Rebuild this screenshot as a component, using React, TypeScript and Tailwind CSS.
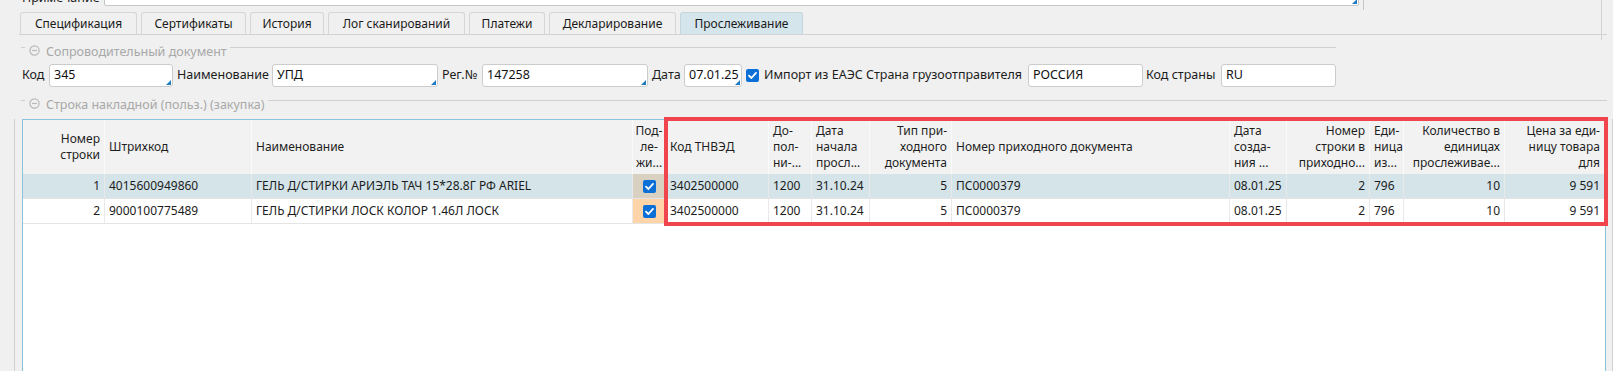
import React from "react";

type Align = "l" | "r" | "c";
const cols: { w: number; a: Align; h: string[] }[] = [
  { w: 82, a: "r", h: ["Номер", "строки"] },
  { w: 147, a: "l", h: ["Штрихкод"] },
  { w: 381, a: "l", h: ["Наименование"] },
  { w: 33, a: "c", h: ["Под-", "ле-", "жи..."] },
  { w: 103, a: "l", h: ["Код ТНВЭД"] },
  { w: 43, a: "l", h: ["До-", "пол-", "ни-..."] },
  { w: 58, a: "l", h: ["Дата", "начала", "просл..."] },
  { w: 82, a: "r", h: ["Тип при-", "ходного", "документа"] },
  { w: 278, a: "l", h: ["Номер приходного документа"] },
  { w: 57, a: "l", h: ["Дата", "созда-", "ния ..."] },
  { w: 83, a: "r", h: ["Номер", "строки в", "приходно..."] },
  { w: 34, a: "l", h: ["Еди-", "ница", "из..."] },
  { w: 101, a: "r", h: ["Количество в", "единицах", "прослеживае..."] },
  { w: 100, a: "r", h: ["Цена за еди-", "ницу товара", "для"] },
];

const rows = [
  {
    bg: "bg-[#d4e4e9]",
    chk: "bg-[#d8d1c1]",
    v: ["1", "4015600949860", "ГЕЛЬ Д/СТИРКИ АРИЭЛЬ ТАЧ 15*28.8Г РФ ARIEL", "", "3402500000", "1200", "31.10.24", "5", "ПС0000379", "08.01.25", "2", "796", "10", "9 591"],
  },
  {
    bg: "bg-white",
    chk: "bg-[#ffd4a8]",
    v: ["2", "9000100775489", "ГЕЛЬ Д/СТИРКИ ЛОСК КОЛОР 1.46Л ЛОСК", "", "3402500000", "1200", "31.10.24", "5", "ПС0000379", "08.01.25", "2", "796", "10", "9 591"],
  },
];

const alignCls = (a: Align) =>
  a === "r" ? "justify-end text-right" : a === "c" ? "justify-center text-center" : "justify-start text-left";

function Check() {
  return (
    <svg width="13" height="13" viewBox="0 0 13 13">
      <rect x="0" y="0" width="13" height="13" rx="2" fill="#0b6fd8" />
      <path d="M3 6.6 L5.4 9 L10 3.9" stroke="#fff" strokeWidth="1.8" fill="none" strokeLinecap="round" strokeLinejoin="round" />
    </svg>
  );
}

function Tri() {
  return (
    <span className="absolute bottom-[1px] right-[1px] w-0 h-0 border-l-[5px] border-l-transparent border-b-[5px] border-b-[#1f7cc0]" />
  );
}

function Input({ w, v, tri }: { w: number; v: string; tri?: boolean }) {
  return (
    <div
      className="relative h-[23px] bg-white border border-[#cccccc] rounded-[3px] pl-[4px] flex items-center text-[#111]"
      style={{ width: w }}
    >
      {v}
      {tri && <Tri />}
    </div>
  );
}

function Minus() {
  return (
    <svg width="11" height="11" viewBox="0 0 11 11" className="mt-[2px]">
      <circle cx="5.5" cy="5.5" r="4.6" stroke="#b9b9b9" strokeWidth="1.2" fill="none" />
      <path d="M3 5.5 H8" stroke="#b9b9b9" strokeWidth="1.2" />
    </svg>
  );
}

function Group({ title, end }: { title: string; end: number }) {
  return (
    <div className="flex items-start h-[18px] ml-[21px]" style={{ width: end - 21 }}>
      <div className="mt-[6px] h-px w-[4px] bg-[#d0d0d0]" />
      <div className="ml-[4px] mt-[2px]">
        <Minus />
      </div>
      <div className="ml-[6px] leading-[18px] text-[12.5px] text-[#a8a8a8] whitespace-nowrap mt-[2px]">{title}</div>
      <div className="ml-[3px] mt-[6px] h-px flex-1 bg-[#d0d0d0]" />
    </div>
  );
}

const tabs = [
  { t: "Спецификация", w: 117 },
  { t: "Сертификаты", w: 105 },
  { t: "История", w: 74 },
  { t: "Лог сканирований", w: 137 },
  { t: "Платежи", w: 76 },
  { t: "Декларирование", w: 127 },
  { t: "Прослеживание", w: 123, sel: true },
];

export default function App() {
  return (
    <div className="relative w-[1613px] h-[371px] overflow-hidden bg-[#f0f0f0] font-['Noto_Sans',sans-serif] text-[12px] text-[#1c1c1c]">
      {/* Примечание row (cut off at top) */}
      <div className="flex items-start h-[23px] -mt-[17px] pl-[22px]">
        <div className="w-[82px] leading-[23px] pt-[3px] text-[12.5px] text-[#1c1c1c]">Примечание</div>
        <div className="relative w-[1255px] h-[23px] bg-white border border-[#c6c6c6] rounded-[2px]">
          <Tri />
        </div>
        <div className="ml-[4px] w-px h-[27px] bg-[#c8c8c8]" />
        <div className="ml-[237px] w-px h-[57px] bg-[#d4d4d4]" />
      </div>

      {/* Tabs */}
      <div className="mt-[6px] ml-[19px] w-[1588px] flex items-end gap-[4px] h-[23px] border-b border-[#d3d3d3] pl-[1px]">
        {tabs.map((t) => (
          <div
            key={t.t}
            className={
              "h-[22px] flex items-center justify-center border border-b-0 rounded-t-[3px] whitespace-nowrap text-[#1a1a1a] " +
              (t.sel ? "bg-[#d5e5ec] border-[#c5d5dc]" : "bg-[#f0f0f0] border-[#d6d6d6]")
            }
            style={{ width: t.w }}
          >
            {t.t}
          </div>
        ))}
      </div>

      {/* Group 1 */}
      <div className="mt-[6px]">
        <Group title="Сопроводительный документ" end={1336} />
      </div>

      {/* Fields row */}
      <div className="mt-[5px] flex items-center h-[23px] pl-[22px] whitespace-nowrap text-[12.5px]">
        <div className="w-[27px]">Код</div>
        <Input w={124} v="345" tri />
        <div className="w-[99px] pl-[4px]">Наименование</div>
        <Input w={166} v="УПД" tri />
        <div className="w-[44px] pl-[4px]">Рег.№</div>
        <Input w={166} v="147258" tri />
        <div className="w-[36px] pl-[4px]">Дата</div>
        <Input w={58} v="07.01.25" tri />
        <div className="w-[22px] pl-[4px] flex items-center">
          <Check />
        </div>
        <div className="w-[264px]">Импорт из ЕАЭС Страна грузоотправителя</div>
        <Input w={115} v="РОССИЯ" />
        <div className="w-[78px] pl-[3px]">Код страны</div>
        <Input w={115} v="RU" />
      </div>

      {/* Group 2 */}
      <div className="mt-[7px]">
        <Group title="Строка накладной (польз.) (закупка)" end={1607} />
      </div>

      {/* Table area */}
      <div className="mt-[7px] flex h-[260px]">
        <div className="ml-[14px] w-px bg-[#d0d0d0]" />
        <div className="ml-[7px] w-[1584px] bg-white border-t border-l border-r border-[#8cc3dc] overflow-hidden">
          {/* header */}
          <div className="flex h-[54px] bg-[#f2f2f2]">
            {cols.map((c, i) => (
              <div
                key={i}
                className={"flex flex-col justify-center px-[4px] border-r border-[#fafafa] overflow-hidden leading-[16px] whitespace-nowrap text-[#1e1e1e] " + (c.a === "r" ? "items-end" : c.a === "c" ? "items-center" : "items-start")}
                style={{ width: c.w, minWidth: c.w }}
              >
                {c.h.map((l, j) => (
                  <div key={j} className={c.a === "r" ? "text-right" : c.a === "c" ? "text-center" : "text-left"}>
                    {l}
                  </div>
                ))}
              </div>
            ))}
          </div>
          {rows.map((r, ri) => (
            <div key={ri} className={"flex h-[25px] border-b border-[#e4e4e4] " + r.bg}>
              {cols.map((c, i) => (
                <div
                  key={i}
                  className={
                    "flex items-center px-[4px] border-r border-[#e9e9e9] overflow-hidden whitespace-nowrap " +
                    alignCls(c.a) +
                    (i === 3 ? " " + r.chk : "")
                  }
                  style={{ width: c.w, minWidth: c.w }}
                >
                  {i === 3 ? <Check /> : r.v[i]}
                </div>
              ))}
            </div>
          ))}
        </div>
        <div className="ml-[6px] w-px bg-[#d0d0d0]" />
      </div>

      {/* highlight annotation */}
      <div className="absolute left-[664px] top-[117px] w-[944px] h-[109px] border-[4px] border-[#f0454d] pointer-events-none" />
    </div>
  );
}
